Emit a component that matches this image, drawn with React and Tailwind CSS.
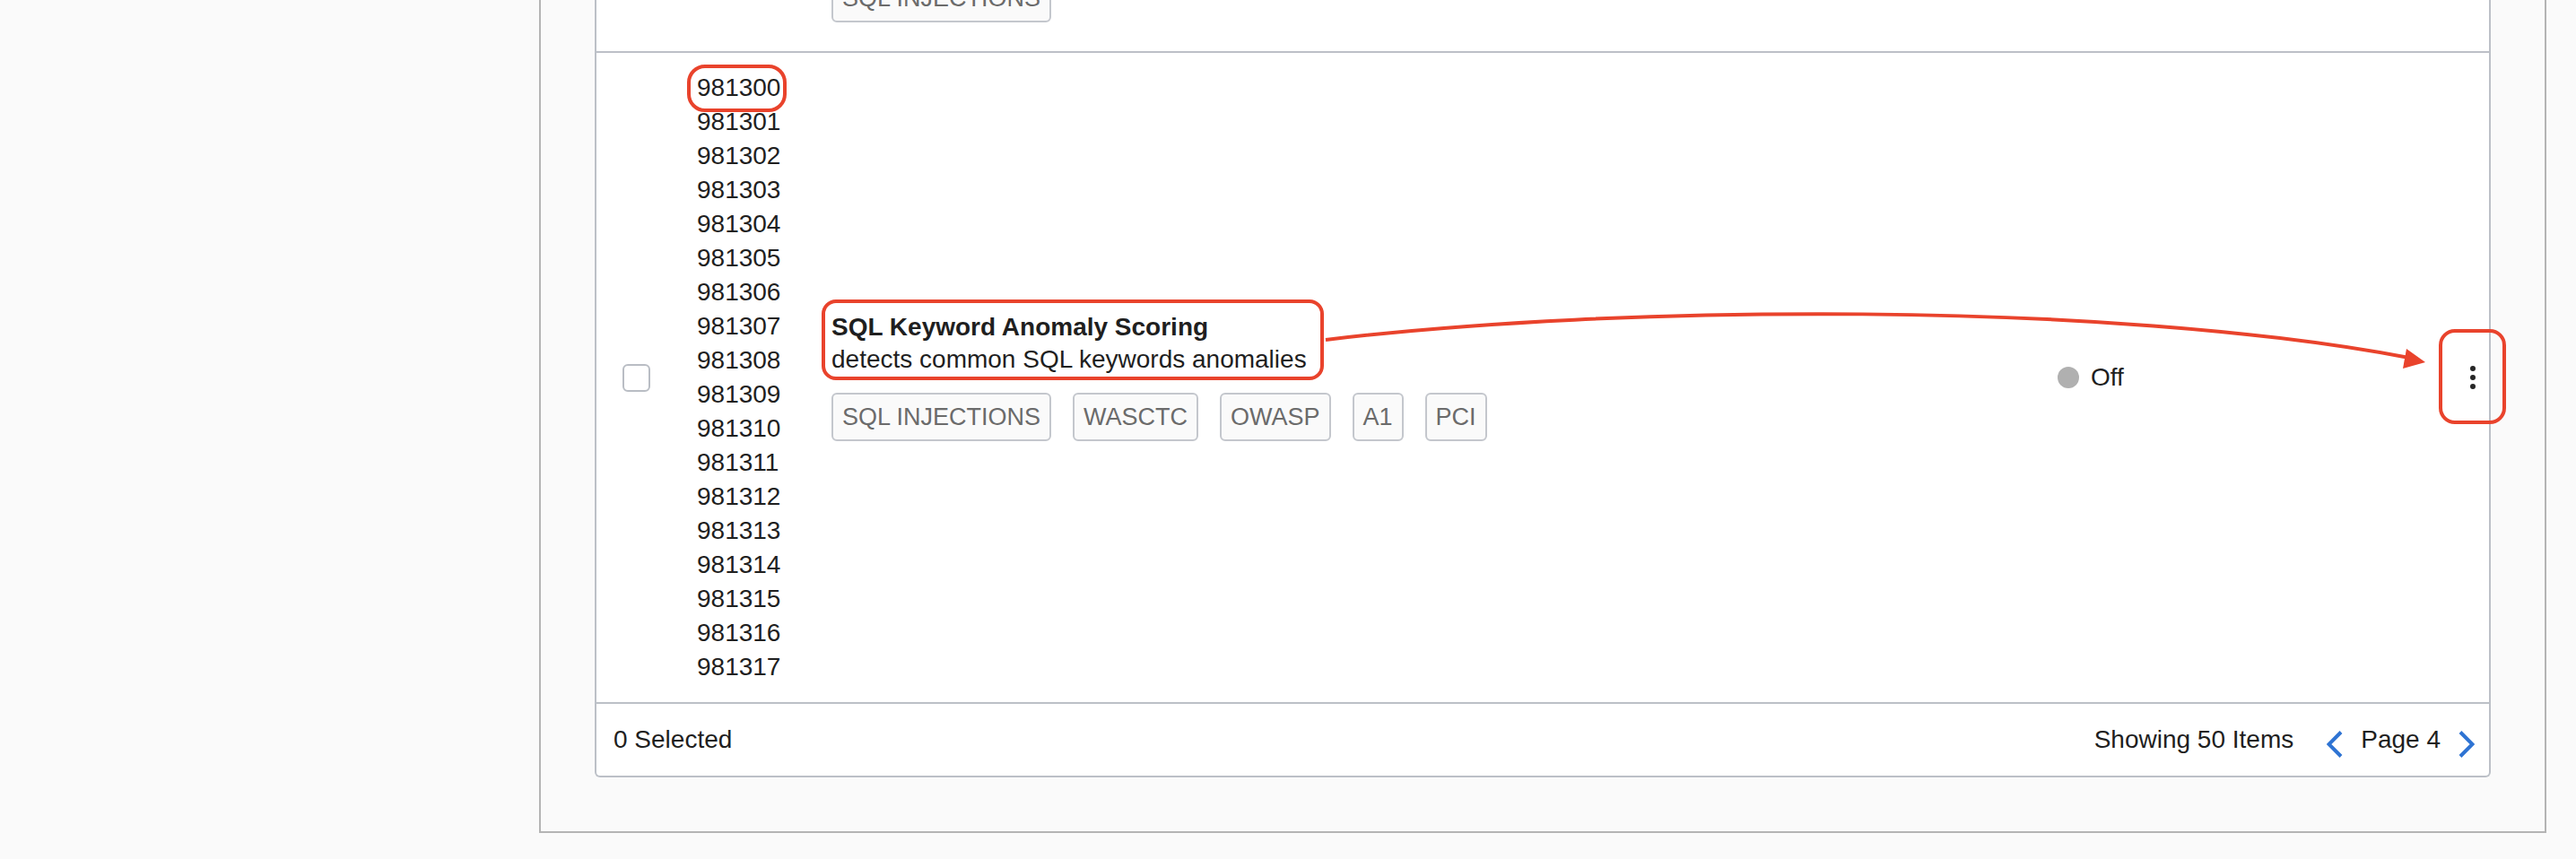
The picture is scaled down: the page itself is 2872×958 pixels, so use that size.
const ruleIds = Array.from({ length: 18 }, (_, i) => 981300 + i);
const tags = ["SQL INJECTIONS", "WASCTC", "OWASP", "A1", "PCI"];

const Tag = ({ label }) => (
  <span className="inline-block rounded-[6px] border-2 border-[#c4c7cd] bg-[#fafafa] px-[10px] py-[6px] text-[27px] leading-[38px] text-[#6b6b6b]">
    {label}
  </span>
);

const Chevron = ({ dir }) => (
  <svg className="mt-[10px] h-[30px] w-[18px]" viewBox="0 0 18 30" fill="none">
    <path
      d={dir === "left" ? "M16 1.5L2.5 15L16 28.5" : "M2 1.5L15.5 15L2 28.5"}
      stroke="#2e73d3"
      strokeWidth="4"
    />
  </svg>
);

const App = () => {
  return (
    <div className="relative h-[958px] w-[2872px] overflow-hidden bg-[#fafafa] font-['Liberation_Sans',Arial,sans-serif] text-[#1f1f1f]">
      <div className="flex">
        <div className="w-[601px] shrink-0" />

        {/* outer panel */}
        <div className="w-[2238px] shrink-0 border-x-2 border-b-2 border-[#b4b4b4] px-[60px] pb-[60px]">
          {/* table */}
          <div className="rounded-b-[6px] border-x-2 border-b-2 border-[#bcc0c7] bg-white">
            {/* previous row, scrolled mostly out of view */}
            <div className="h-[59px] overflow-hidden border-b-2 border-[#bcc0c7] pl-[262px]">
              <div className="-mt-[29px]">
                <Tag label="SQL INJECTIONS" />
              </div>
            </div>

            {/* current row */}
            <div className="flex items-center border-b-2 border-[#bcc0c7] pt-[20px] pb-[20px]">
              <div className="w-[112px] shrink-0 pl-[29px]">
                <div className="h-[31px] w-[31px] rounded-[6px] border-2 border-[#b9bdc4] bg-white" />
              </div>

              <div className="w-[150px] shrink-0 text-[28px] leading-[38px]">
                {ruleIds.map((id) => (
                  <div key={id}>{id}</div>
                ))}
              </div>

              <div className="min-w-0 flex-1 -mt-[4px]">
                <div className="text-[28px] font-bold leading-[36px]">
                  SQL Keyword Anomaly Scoring
                </div>
                <div className="text-[28px] leading-[36px]">
                  detects common SQL keywords anomalies
                </div>
                <div className="mt-[19px] flex gap-[24px]">
                  {tags.map((t) => (
                    <Tag key={t} label={t} />
                  ))}
                </div>
              </div>

              <div className="flex w-[445px] shrink-0 items-center gap-[13px]">
                <span className="h-[24px] w-[24px] rounded-full bg-[#b0b0b0]" />
                <span className="text-[28px] leading-[38px]">Off</span>
              </div>

              <div className="flex w-[36px] shrink-0 flex-col items-center gap-[4px]">
                <span className="h-[6px] w-[6px] rounded-full bg-[#262626]" />
                <span className="h-[6px] w-[6px] rounded-full bg-[#262626]" />
                <span className="h-[6px] w-[6px] rounded-full bg-[#262626]" />
              </div>
            </div>

            {/* footer */}
            <div className="flex h-[80px] items-center justify-between pl-[19px] pr-[16px] text-[28px]">
              <span>0 Selected</span>
              <div className="flex items-center">
                <span>Showing 50 Items</span>
                <span className="ml-[37px]">
                  <Chevron dir="left" />
                </span>
                <span className="ml-[20px]">Page 4</span>
                <span className="ml-[20px]">
                  <Chevron dir="right" />
                </span>
              </div>
            </div>
          </div>
        </div>
      </div>

      {/* annotations */}
      <div className="pointer-events-none absolute left-[766px] top-[72px] h-[53px] w-[111px] rounded-[20px] border-4 border-[#e9432c]" />
      <div className="pointer-events-none absolute left-[916px] top-[334px] h-[90px] w-[560px] rounded-[16px] border-4 border-[#e9432c]" />
      <div className="pointer-events-none absolute left-[2719px] top-[367px] h-[106px] w-[75px] rounded-[18px] border-4 border-[#e9432c]" />
      <svg
        className="pointer-events-none absolute left-0 top-0"
        width="2872"
        height="958"
        viewBox="0 0 2872 958"
        fill="none"
      >
        <path
          d="M1478 379 C1800 340, 2350 335, 2686 399"
          stroke="#e9432c"
          strokeWidth="4"
        />
        <polygon points="2704,404 2683,389 2679,411" fill="#e9432c" />
      </svg>
    </div>
  );
};

export default App;
